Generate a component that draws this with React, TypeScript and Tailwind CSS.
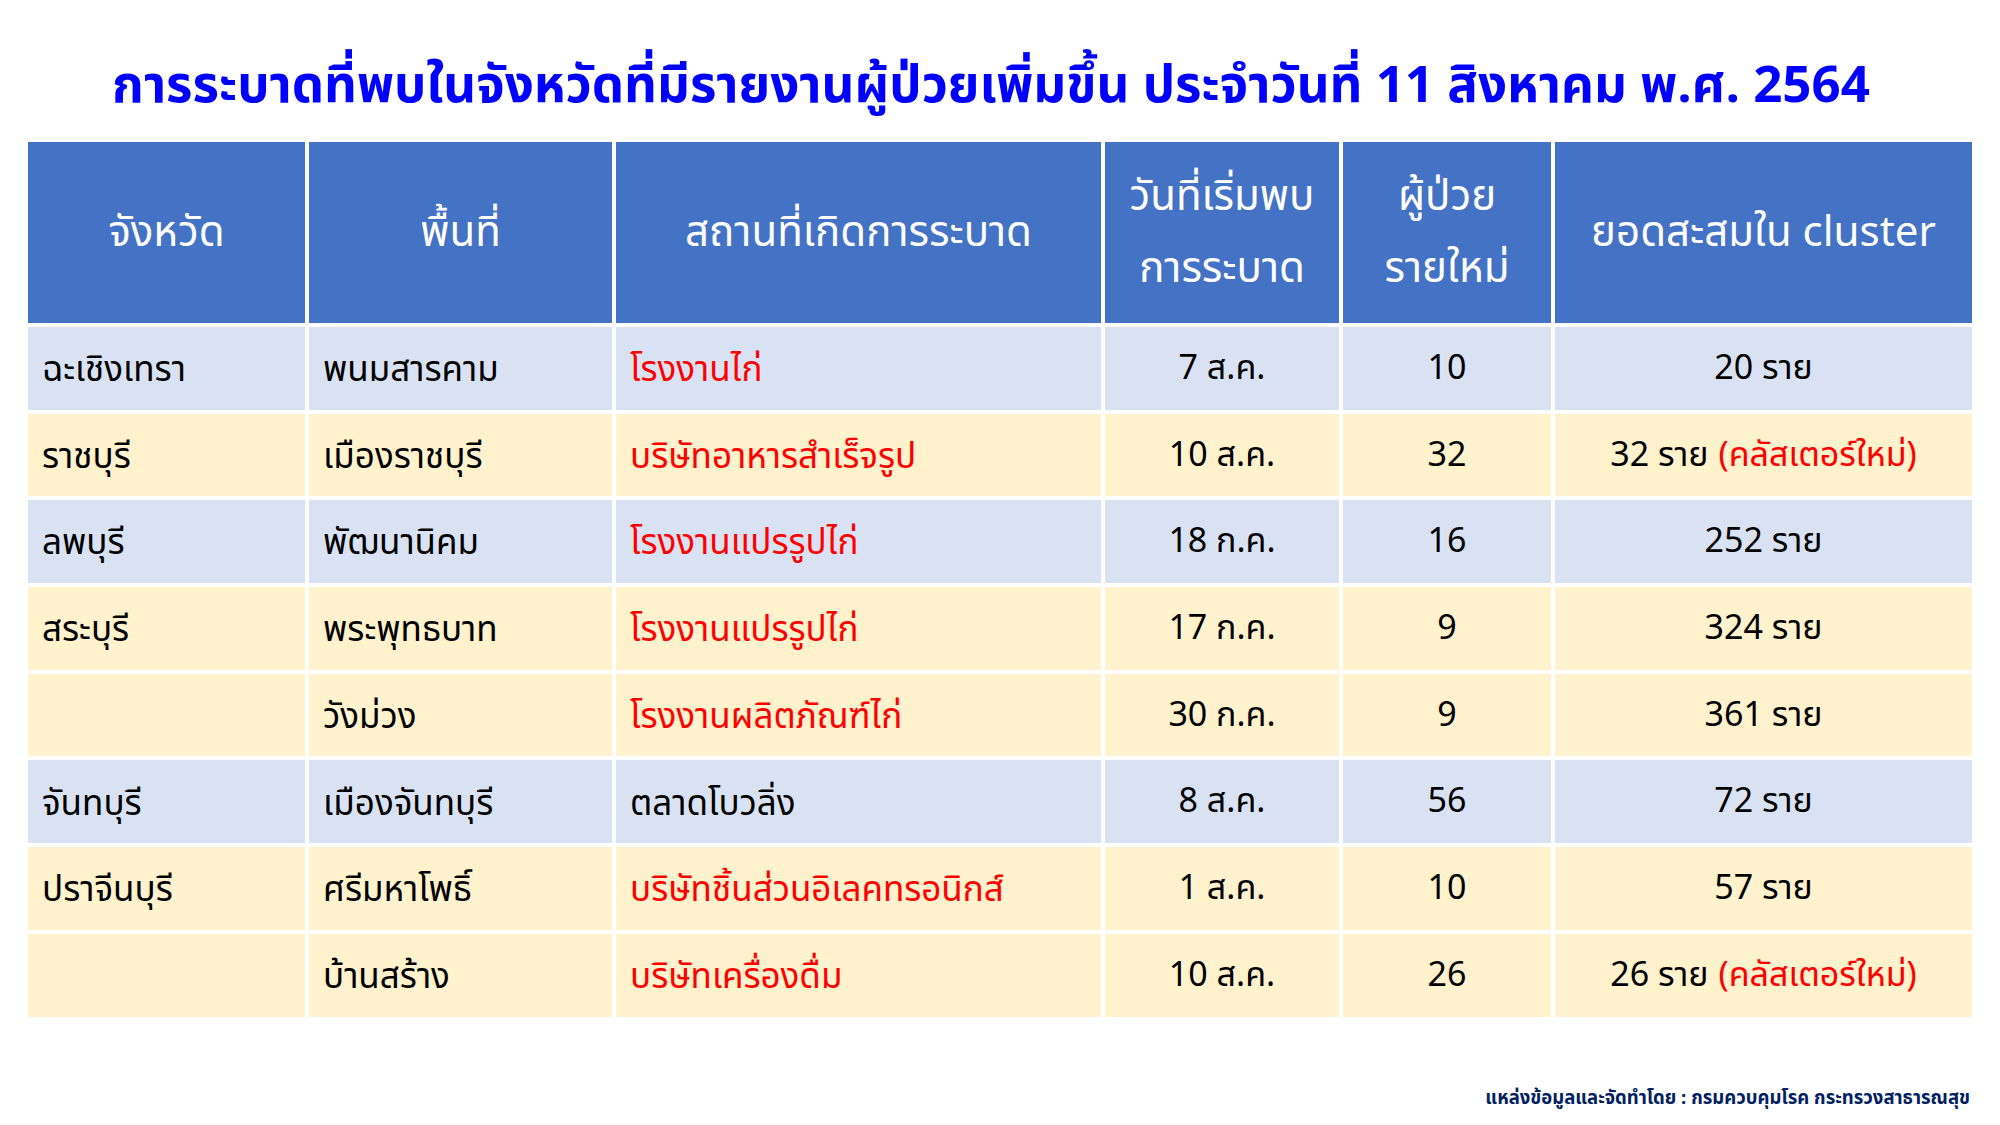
import React from "react";

type Row = {
  prov: string;
  area: string;
  place: string;
  red: boolean;
  date: string;
  cases: string;
  total: string;
  isNew?: boolean;
  tone: "blue" | "yellow";
};

const ROWS: Row[] = [
  { prov: "ฉะเชิงเทรา", area: "พนมสารคาม", place: "โรงงานไก่", red: true, date: "7 ส.ค.", cases: "10", total: "20 ราย", tone: "blue" },
  { prov: "ราชบุรี", area: "เมืองราชบุรี", place: "บริษัทอาหารสำเร็จรูป", red: true, date: "10 ส.ค.", cases: "32", total: "32 ราย", isNew: true, tone: "yellow" },
  { prov: "ลพบุรี", area: "พัฒนานิคม", place: "โรงงานแปรรูปไก่", red: true, date: "18 ก.ค.", cases: "16", total: "252 ราย", tone: "blue" },
  { prov: "สระบุรี", area: "พระพุทธบาท", place: "โรงงานแปรรูปไก่", red: true, date: "17 ก.ค.", cases: "9", total: "324 ราย", tone: "yellow" },
  { prov: "", area: "วังม่วง", place: "โรงงานผลิตภัณฑ์ไก่", red: true, date: "30 ก.ค.", cases: "9", total: "361 ราย", tone: "yellow" },
  { prov: "จันทบุรี", area: "เมืองจันทบุรี", place: "ตลาดโบวลิ่ง", red: false, date: "8 ส.ค.", cases: "56", total: "72 ราย", tone: "blue" },
  { prov: "ปราจีนบุรี", area: "ศรีมหาโพธิ์", place: "บริษัทชิ้นส่วนอิเลคทรอนิกส์", red: true, date: "1 ส.ค.", cases: "10", total: "57 ราย", tone: "yellow" },
  { prov: "", area: "บ้านสร้าง", place: "บริษัทเครื่องดื่ม", red: true, date: "10 ส.ค.", cases: "26", total: "26 ราย", isNew: true, tone: "yellow" },
];

const FONT = "font-['Noto_Sans_Thai','Loma','Garuda','Tahoma','Noto_Sans',sans-serif]";

function HeadCell({ children }: { children: React.ReactNode }) {
  return (
    <div className="flex flex-col items-center justify-center bg-[#4472c4] text-white text-[42px] leading-[72px] text-center">
      {children}
    </div>
  );
}

export default function App() {
  return (
    <div className={`w-[2000px] h-[1125px] bg-white ${FONT} overflow-hidden`}>
      <h1 className="pt-[52px] pr-[18px] h-[142px] text-center text-[51px] leading-[70px] font-bold text-[#0000ff] whitespace-nowrap">
        การระบาดที่พบในจังหวัดที่มีรายงานผู้ป่วยเพิ่มขึ้น ประจำวันที่ 11 สิงหาคม พ.ศ. 2564
      </h1>

      <div className="mx-[28px] grid grid-cols-[277px_303px_485px_234px_208px_417px] gap-x-[4px] gap-y-[4px] grid-rows-[181px_repeat(8,82.7px)]">
        <HeadCell>จังหวัด</HeadCell>
        <HeadCell>พื้นที่</HeadCell>
        <HeadCell>สถานที่เกิดการระบาด</HeadCell>
        <HeadCell>
          <span>วันที่เริ่มพบ</span>
          <span>การระบาด</span>
        </HeadCell>
        <HeadCell>
          <span>ผู้ป่วย</span>
          <span>รายใหม่</span>
        </HeadCell>
        <HeadCell>ยอดสะสมใน cluster</HeadCell>

        {ROWS.map((r, i) => {
          const bg = r.tone === "blue" ? "bg-[#d9e2f3]" : "bg-[#fff2cc]";
          return (
            <React.Fragment key={i}>
              <div className={`${bg} flex items-center px-[14px] pt-[6px] text-[35px] text-black`}>{r.prov}</div>
              <div className={`${bg} flex items-center px-[14px] pt-[6px] text-[35px] text-black`}>{r.area}</div>
              <div className={`${bg} flex items-center px-[14px] pt-[6px] text-[35px] whitespace-nowrap ${r.red ? "text-[#ff0000]" : "text-black"}`}>
                {r.place}
              </div>
              <div className={`${bg} flex items-center justify-center text-[34px] text-black`}>{r.date}</div>
              <div className={`${bg} flex items-center justify-center text-[34px] text-black`}>{r.cases}</div>
              <div className={`${bg} flex items-center justify-center text-[34px] text-black whitespace-nowrap`}>
                {r.total}
                {r.isNew && <span className="ml-[10px] text-[#ff0000]">(คลัสเตอร์ใหม่)</span>}
              </div>
            </React.Fragment>
          );
        })}
      </div>

      <div className="mt-[68px] pr-[30px] text-right text-[18.5px] font-bold text-[#002060]">
        แหล่งข้อมูลและจัดทำโดย : กรมควบคุมโรค กระทรวงสาธารณสุข
      </div>
    </div>
  );
}
